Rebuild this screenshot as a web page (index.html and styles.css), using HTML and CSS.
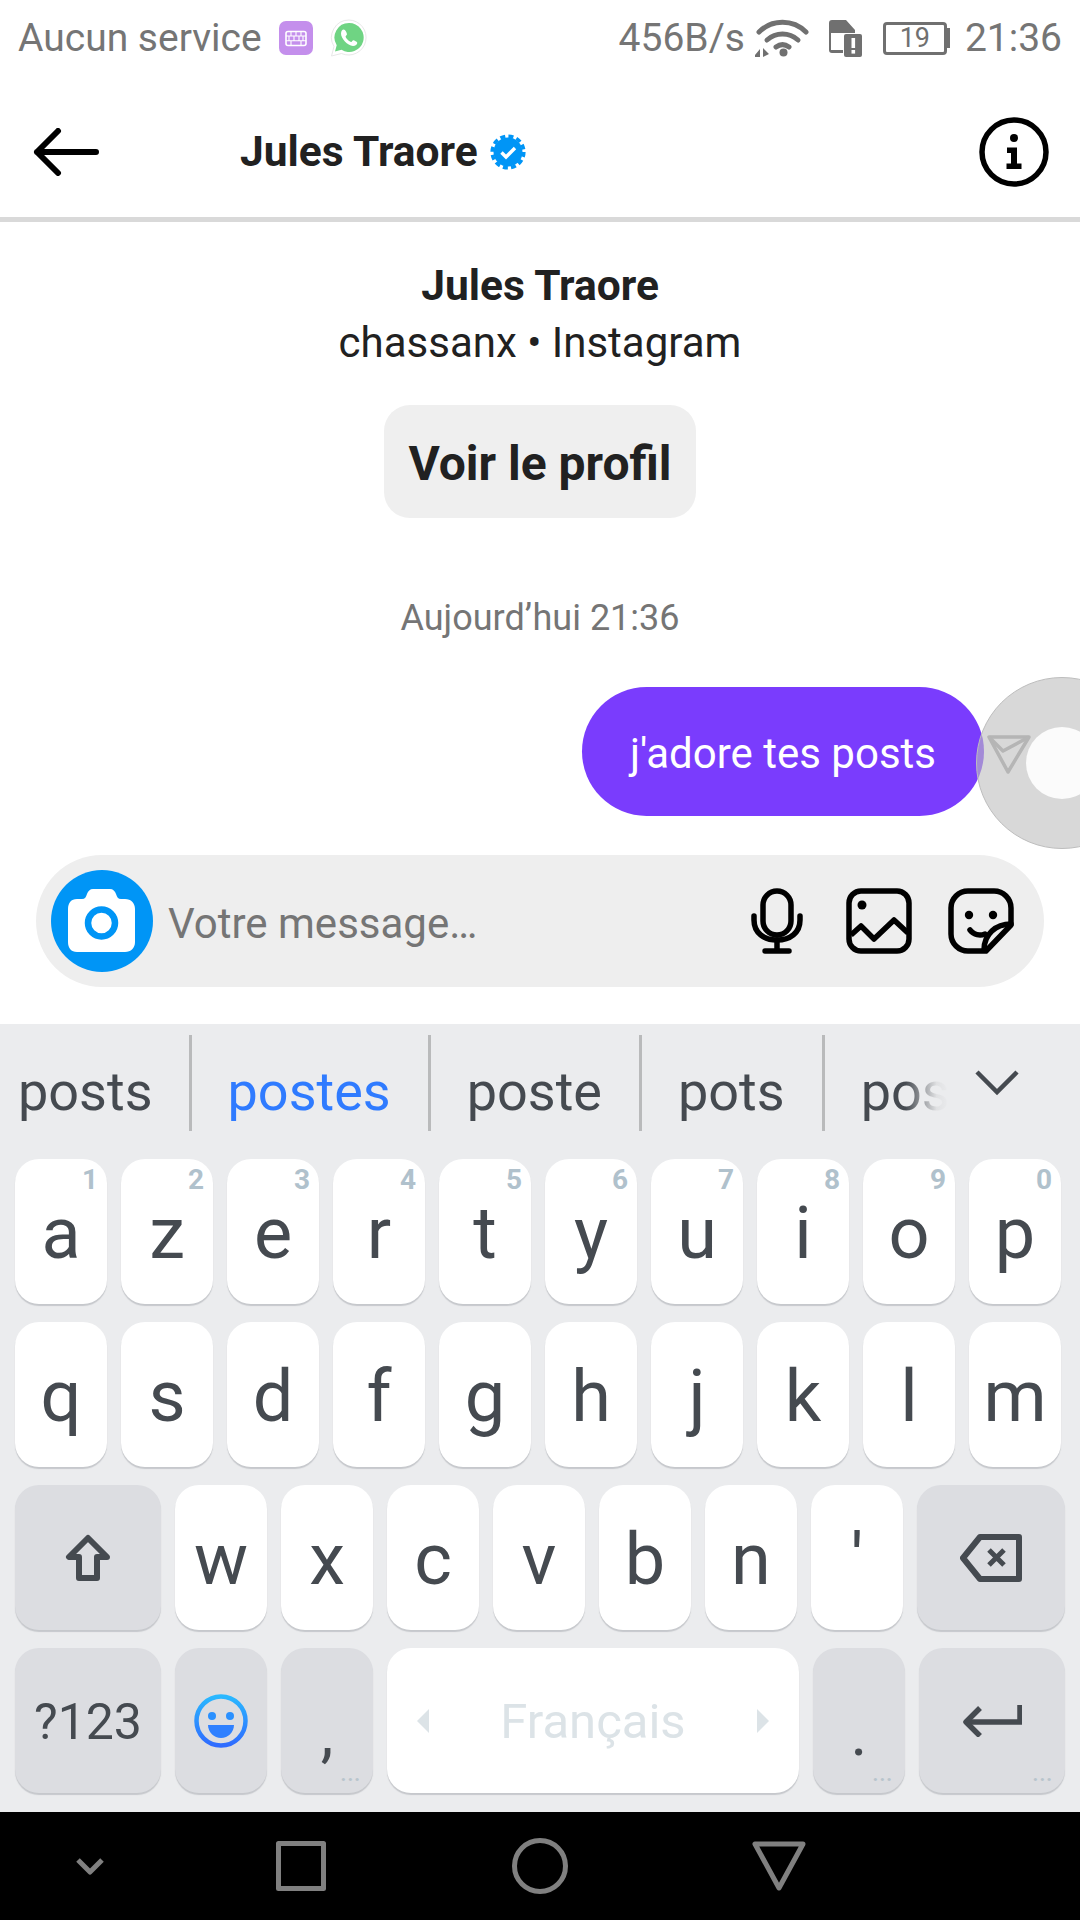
FILE: index.html
```html
<!DOCTYPE html>
<html lang="fr">
<head>
  <meta charset="UTF-8">
  <title>Jules Traore - Messages</title>
  <meta name="viewport" content="width=device-width, initial-scale=1.0">
  <link rel="stylesheet" href="styles.css">
</head>
<body>
<div class="phone">
  <!-- Status bar -->
  <div class="status-bar">
    <div class="status-left">
      <span>Aucun service</span>
      <svg class="ic-kbd" width="34" height="34" viewBox="0 0 34 34">
        <rect width="34" height="34" rx="7" fill="#c48fec"/>
        <rect x="7" y="10.500" width="20" height="14" rx="2" fill="none" stroke="#fff" stroke-width="1.600"/>
        <path d="M7 15h20M7 19.800h20M12 10.500v4.500M17 10.500v4.500M22 10.500v4.500M10 15v4.800M15 15v4.800M20 15v4.800M24 15v4.800M12 19.800v4.700M22 19.800v4.700" stroke="#fff" stroke-width="1.100" fill="none"/>
      </svg>
      <svg class="ic-wa" width="38" height="38" viewBox="0 0 38 38">
        <path d="M19 1a17.500 17.500 0 0 0-15 26.500L1.500 37l10-2.500A17.500 17.500 0 1 0 19 1z" fill="#fff" stroke="#e8e8e8" stroke-width="1"/>
        <path d="M19 4a14.500 14.500 0 0 0-12.300 22.200L5 32.500l6.500-1.700A14.500 14.500 0 1 0 19 4z" fill="#6fd483"/>
        <path d="M13.500 10.500c-1 0-2.500 1.500-2.500 4 0 5 6.500 12 12 12.500 2.500 0 4.300-1.500 4.300-3.300 0-.8-3.300-2.500-4-2.500-.7 0-1.400 1.700-2.100 1.700-1.600 0-5.600-4-5.600-5.500 0-.8 1.400-1.300 1.400-2.200 0-.8-1.500-4.700-3.500-4.700z" fill="#fff"/>
      </svg>
    </div>
    <div class="status-right">
      <span class="net-speed">456B/s</span>
      <svg class="ic-wifi" width="54" height="38" viewBox="0 0 54 38" fill="none" stroke="#707070" stroke-width="5" stroke-linecap="round">
        <path d="M4 13C17 0 38 0 51 13"/>
        <path d="M12 21c9-8 22-8 31 0"/>
        <path d="M21 28c4-3 9-3 13 0"/>
        <circle cx="28.500" cy="33.500" r="4" fill="#707070" stroke="none"/>
        <path d="M0 36l5-6v8H0zM8 29l6 6-6 3z" fill="#707070" stroke="none"/>
      </svg>
      <svg class="ic-sim" width="34" height="38" viewBox="0 0 34 38">
        <path d="M1 4a3 3 0 0 1 3-3h14l9 10v3H3v17h12v3H4a3 3 0 0 1-3-3z" fill="#707070"/>
        <rect x="16" y="15" width="18" height="23" rx="2" fill="#707070"/>
        <rect x="23.500" y="19" width="3.600" height="10" fill="#fff"/>
        <rect x="23.500" y="31" width="3.600" height="3.600" fill="#fff"/>
      </svg>
      <div class="battery">
        <div class="battery-body">19</div>
        <div class="battery-tip"></div>
      </div>
      <span>21:36</span>
    </div>
  </div>

  <!-- Conversation header -->
  <header class="chat-header">
    <svg class="ic-back" width="66" height="48" viewBox="0 0 66 48" fill="none" stroke="#000" stroke-width="6" stroke-linecap="round" stroke-linejoin="round">
      <path d="M63 24H4M25 3L4 24l21 21"/>
    </svg>
    <div class="chat-title">
      <span>Jules Traore</span>
      <svg width="36" height="36" viewBox="0 0 36 36">
        <circle cx="18" cy="18" r="14.500" fill="#0095f6"/>
        <circle cx="18" cy="18" r="15.800" fill="none" stroke="#0095f6" stroke-width="3.600" stroke-dasharray="5 3.270"/>
        <path d="M11.500 18.500l4.500 4.500 9-9" fill="none" stroke="#fff" stroke-width="3.400"/>
      </svg>
    </div>
    <svg class="ic-info" width="70" height="70" viewBox="0 0 70 70">
      <circle cx="35" cy="35" r="32" fill="none" stroke="#000" stroke-width="5.500"/>
      <circle cx="35" cy="21" r="4" fill="#000"/>
      <path d="M28 30.500h10v16h4.500V52h-15v-5.500H32V36h-4z" fill="#000"/>
    </svg>
  </header>

  <!-- Conversation -->
  <main class="chat">
    <div class="profile">
      <div class="profile-name">Jules Traore</div>
      <div class="profile-sub">chassanx • Instagram</div>
      <div class="profile-btn">Voir le profil</div>
    </div>
    <div class="timestamp">Aujourd’hui 21:36</div>
    <div class="message-row">
      <div class="bubble">j'adore tes posts</div>
      <svg class="ic-send" width="44" height="40" viewBox="0 0 44 40" fill="none" stroke="#a7a7a7" stroke-width="3.500" stroke-linejoin="round">
        <path d="M2 3h40L21 38z"/>
        <path d="M2 3l14 14L42 3"/>
      </svg>
    </div>

    <div class="composer">
      <div class="camera-btn">
        <svg width="102" height="102" viewBox="0 0 102 102">
          <path d="M26 29h5c3 0 4-2 5-5 1-3 3-5 6-5h17c3 0 5 2 6 5 1 3 2 5 5 5h4c6 0 10 4 10 10v33c0 6-4 10-10 10H26c-6 0-9-4-9-10V39c0-6 3-10 9-10z" fill="#fff"/>
          <circle cx="50.500" cy="53" r="13.500" fill="none" stroke="#0095f6" stroke-width="6.500"/>
        </svg>
      </div>
      <span class="composer-input">Votre message…</span>
      <svg class="ic-mic" width="52" height="66" viewBox="0 0 52 66" fill="none" stroke="#000" stroke-width="5.500" stroke-linecap="round">
        <rect x="12" y="3" width="28" height="44" rx="14"/>
        <path d="M3 28v4c0 13 10 20 23 20s23-7 23-20v-4"/>
        <path d="M26 52v11M14 63h24"/>
      </svg>
      <svg class="ic-img" width="66" height="66" viewBox="0 0 66 66" fill="none" stroke="#000" stroke-width="5.500" stroke-linejoin="round">
        <rect x="3" y="3" width="60" height="60" rx="12"/>
        <circle cx="16" cy="17" r="4.500" fill="#000" stroke="none"/>
        <path d="M5 47l10-9 13 13 20-19 14 13"/>
      </svg>
      <svg class="ic-sticker" width="66" height="66" viewBox="0 0 66 66" fill="none" stroke="#000" stroke-width="5.500" stroke-linecap="round" stroke-linejoin="round">
        <path d="M20 3h26a17 17 0 0 1 17 17v17L38 63H20A17 17 0 0 1 3 46V20A17 17 0 0 1 20 3z"/>
        <path d="M63 36c-15 0-27 10-27 26"/>
        <circle cx="21" cy="27" r="4.200" fill="#000" stroke="none"/>
        <circle cx="45" cy="27" r="4.200" fill="#000" stroke="none"/>
        <path d="M22 42c4 5 10 6 15 4"/>
      </svg>
    </div>

    <!-- Touch indicator -->
    <div class="touch-ring"><div class="touch-dot"></div></div>
  </main>

  <!-- Keyboard -->
  <section class="keyboard">
    <div class="suggestions">
      <span class="word first">posts</span>
      <span class="word accent">postes</span>
      <span class="word">poste</span>
      <span class="word">pots</span>
      <span class="word last"><span class="word-fade">pos</span></span>
      <svg class="ic-collapse" width="44" height="27" viewBox="0 0 44 27" fill="none" stroke="#454a50" stroke-width="4.500">
        <path d="M2 3l20 20L42 3"/>
      </svg>
    </div>

    <div class="key-rows">
      <div class="key-row">
        <div class="key"><i>1</i>a</div>
        <div class="key"><i>2</i>z</div>
        <div class="key"><i>3</i>e</div>
        <div class="key"><i>4</i>r</div>
        <div class="key"><i>5</i>t</div>
        <div class="key"><i>6</i>y</div>
        <div class="key"><i>7</i>u</div>
        <div class="key"><i>8</i>i</div>
        <div class="key"><i>9</i>o</div>
        <div class="key"><i>0</i>p</div>
      </div>
      <div class="key-row">
        <div class="key">q</div>
        <div class="key">s</div>
        <div class="key">d</div>
        <div class="key">f</div>
        <div class="key">g</div>
        <div class="key">h</div>
        <div class="key">j</div>
        <div class="key">k</div>
        <div class="key">l</div>
        <div class="key">m</div>
      </div>
      <div class="key-row">
        <div class="key fn wide">
          <svg width="46" height="48" viewBox="0 0 46 48" fill="none" stroke="#454a50" stroke-width="6" stroke-linejoin="round">
            <path d="M23 4L4 23h10v21h18V23h10z"/>
          </svg>
        </div>
        <div class="key">w</div>
        <div class="key">x</div>
        <div class="key">c</div>
        <div class="key">v</div>
        <div class="key">b</div>
        <div class="key">n</div>
        <div class="key">'</div>
        <div class="key fn wide">
          <svg width="62" height="48" viewBox="0 0 62 48" fill="none" stroke="#454a50" stroke-width="6" stroke-linejoin="round">
            <path d="M20 3h39v42H20L3 24z"/>
            <path d="M29 16l15 15M44 16L29 31" stroke-width="5"/>
          </svg>
        </div>
      </div>
      <div class="key-row">
        <div class="key fn wide sym">?123</div>
        <div class="key fn">
          <svg width="54" height="54" viewBox="0 0 54 54">
            <defs>
              <linearGradient id="emojiGrad" x1="0" y1="0" x2="0" y2="1">
                <stop offset="0" stop-color="#2ab8ff"/>
                <stop offset="1" stop-color="#2f6bff"/>
              </linearGradient>
            </defs>
            <circle cx="27" cy="27" r="24.500" fill="none" stroke="url(#emojiGrad)" stroke-width="4.500"/>
            <circle cx="18" cy="22" r="4" fill="#2a90ff"/>
            <circle cx="36" cy="22" r="4" fill="#2a90ff"/>
            <path d="M14 31h26c0 7-6 13-13 13s-13-6-13-13z" fill="#2f80ff"/>
          </svg>
        </div>
        <div class="key fn punct">,<b>...</b></div>
        <div class="key space">
          <span class="arrow-left"></span>
          <span class="space-label">Français</span>
          <span class="arrow-right"></span>
        </div>
        <div class="key fn punct">.<b>...</b></div>
        <div class="key fn wide">
          <svg width="60" height="32" viewBox="0 0 60 32" fill="none" stroke="#454a50" stroke-width="5.500">
            <path d="M58 0v17H6"/>
            <path d="M18 3L4 17l14 14" stroke-linejoin="round"/>
          </svg>
          <b>...</b>
        </div>
      </div>
    </div>
  </section>

  <!-- Navigation bar -->
  <nav class="nav-bar">
    <svg class="ic-hide" width="28" height="18" viewBox="0 0 28 18" fill="none" stroke="#808080" stroke-width="5" stroke-linejoin="round">
      <path d="M2 3l12 12L26 3"/>
    </svg>
    <svg class="ic-recent" width="50" height="50" viewBox="0 0 50 50" fill="none" stroke="#808080" stroke-width="5" stroke-linejoin="round">
      <rect x="2.500" y="2.500" width="45" height="45"/>
    </svg>
    <svg class="ic-home" width="56" height="56" viewBox="0 0 56 56" fill="none" stroke="#808080" stroke-width="5">
      <circle cx="28" cy="28" r="25.500"/>
    </svg>
    <svg class="ic-return" width="54" height="50" viewBox="0 0 54 50" fill="none" stroke="#808080" stroke-width="5" stroke-linejoin="round">
      <path d="M3 3h48L27 47z"/>
    </svg>
  </nav>
</div>
</body>
</html>
```

FILE: styles.css
```css
/* ===== Base ===== */
* {
  margin: 0;
  padding: 0;
  box-sizing: border-box;
}
html, body {
  width: 1080px;
  height: 1920px;
  font-family: Roboto, sans-serif;
  background: #fff;
}
.phone {
  position: relative;
  width: 1080px;
  height: 1920px;
  display: flex;
  flex-direction: column;
  overflow: hidden;
}
svg {
  display: block;
  flex-shrink: 0;
}

/* ===== Status bar ===== */
.status-bar {
  height: 72px;
  padding: 4px 18px 0 18px;
  display: flex;
  align-items: center;
  justify-content: space-between;
  color: #757575;
  font-size: 39px;
}
.status-left,
.status-right {
  display: flex;
  align-items: center;
}
.ic-kbd { margin-left: 17px; }
.ic-wa { margin-left: 17px; }
.net-speed { margin-right: 10px; }
.ic-sim { margin-left: 19px; }
.battery {
  margin: 0 15px 0 21px;
  display: flex;
  align-items: center;
}
.battery-body {
  width: 64px;
  height: 33px;
  border: 3px solid #707070;
  border-radius: 4px;
  color: #707070;
  font-size: 27px;
  line-height: 27px;
  text-align: center;
}
.battery-tip {
  width: 3px;
  height: 20px;
  background: #707070;
}

/* ===== Chat header ===== */
.chat-header {
  height: 150px;
  border-bottom: 5px solid #d9d9d9;
  padding: 14px 31px 0 33px;
  display: flex;
  align-items: center;
  color: #212121;
}
.chat-title {
  display: flex;
  align-items: center;
  gap: 12px;
  margin-left: 141px;
  font-size: 42.5px;
  font-weight: 700;
}
.ic-info { margin-left: auto; }

/* ===== Conversation ===== */
.chat {
  flex: 1;
  position: relative;
  display: flex;
  flex-direction: column;
}
.profile {
  display: flex;
  flex-direction: column;
  align-items: center;
  color: #212121;
}
.profile-name {
  margin-top: 39px;
  font-size: 42.5px;
  font-weight: 700;
  line-height: 50px;
}
.profile-sub {
  margin-top: 7px;
  font-size: 42px;
  line-height: 50px;
}
.profile-btn {
  margin-top: 37px;
  width: 312px;
  height: 113px;
  border-radius: 26px;
  background: #efefef;
  font-size: 48px;
  font-weight: 700;
  line-height: 117px;
  text-align: center;
}
.timestamp {
  margin-top: 80px;
  color: #757575;
  font-size: 36px;
  line-height: 40px;
  text-align: center;
}
.message-row {
  margin-top: 49px;
  padding-right: 49px;
  display: flex;
  justify-content: flex-end;
  align-items: center;
}
.bubble {
  height: 129px;
  padding: 0 48px;
  border-radius: 65px;
  background: #7a3cfd;
  color: #fff;
  font-size: 42px;
  line-height: 133px;
}
.ic-send { margin-left: 3px; margin-top: 4px; }

.composer {
  margin: auto 36px 37px;
  height: 132px;
  padding: 0 30px 0 15px;
  border-radius: 66px;
  background: #eeeeee;
  display: flex;
  align-items: center;
}
.camera-btn {
  width: 102px;
  height: 102px;
  border-radius: 50%;
  background: #0095f6;
}
.composer-input {
  margin-left: 15px;
  padding-top: 4px;
  flex: 1;
  color: #757575;
  font-size: 42px;
}
.ic-img { margin-left: 43px; }
.ic-sticker { margin-left: 36px; }

.touch-ring {
  position: absolute;
  left: 976px;
  top: 455px;
  width: 172px;
  height: 172px;
  border: 1px solid #bdbdbd;
  border-radius: 50%;
  background: rgba(190, 190, 190, 0.6);
  display: flex;
  align-items: center;
  justify-content: center;
}
.touch-dot {
  width: 72px;
  height: 72px;
  border-radius: 50%;
  background: #fbfbfb;
}

/* ===== Keyboard ===== */
.keyboard {
  height: 788px;
  background: #ebecee;
  color: #454a50;
}
.suggestions {
  height: 135px;
  padding-top: 11px;
  display: flex;
  align-items: flex-start;
  font-size: 54px;
}
.word {
  height: 96px;
  line-height: 114px;
  padding: 0 37px 0 36px;
  border-right: 3px solid #b9babb;
}
.word.first { padding: 0 36px 0 18px; }
.word.accent { color: #2f7bff; }
.word.last {
  border-right: 0;
  width: 100px;
  padding-right: 0;
  padding-left: 36px;
}
.word-fade {
  background: linear-gradient(90deg, #454a50 50%, #e0e1e3 85%, #ebecee 100%);
  -webkit-background-clip: text;
  background-clip: text;
  color: transparent;
}
.ic-collapse { margin: 34px 0 0 50px; }

.key-rows {
  padding-left: 15px;
  display: flex;
  flex-direction: column;
  gap: 18px;
}
.key-row {
  height: 145px;
  padding-right: 15px;
  display: flex;
  gap: 14px;
}
.key {
  position: relative;
  flex: 0 0 92px;
  padding-top: 4px;
  border-radius: 24px;
  background: #fff;
  box-shadow: 0 2px 1px #c6c8cc;
  font-size: 72px;
  display: flex;
  align-items: center;
  justify-content: center;
}
.key i {
  position: absolute;
  top: 7px;
  right: 9px;
  color: #b0c1cc;
  font-size: 28px;
  font-style: normal;
  font-weight: 700;
  line-height: 28px;
}
.key b {
  position: absolute;
  right: 12px;
  bottom: 12px;
  color: #b8c4cc;
  font-size: 20px;
  font-weight: 700;
  line-height: 14px;
  letter-spacing: 1px;
}
.key.fn {
  background: #dcdde1;
  padding-top: 0;
}
.key.wide {
  flex: 0 0 146px;
}
.key.wide:last-child {
  flex: 1 0 146px;
}
.key.sym {
  font-size: 50px;
  padding-top: 2px;
}
.key.punct {
  font-size: 64px;
  padding-top: 26px;
}
.key.space {
  flex: 0 0 412px;
  padding: 0 30px;
  justify-content: space-between;
  color: #dce3e7;
  font-size: 49px;
}
.space-label { padding-top: 2px; }
.arrow-left,
.arrow-right {
  width: 0;
  height: 0;
  border-top: 12px solid transparent;
  border-bottom: 12px solid transparent;
}
.arrow-left { border-right: 12px solid #dce3e7; }
.arrow-right { border-left: 12px solid #dce3e7; }

/* ===== Navigation bar ===== */
.nav-bar {
  position: relative;
  height: 108px;
  background: #000;
  display: flex;
  align-items: center;
}
.ic-hide { margin-left: 76px; }
.ic-recent { margin-left: 172px; }
.ic-home { margin-left: 186px; }
.ic-return { margin-left: 184px; }
```
